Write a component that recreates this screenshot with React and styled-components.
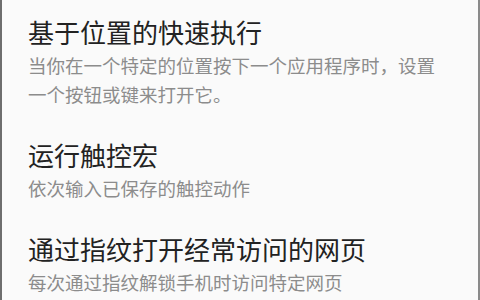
import React from "react";
import styled, { createGlobalStyle } from "styled-components";

const GlobalStyle = createGlobalStyle`
  html, body {
    margin: 0;
    padding: 0;
    background: #fafafa;
  }
  body {
    font-family: "Noto Sans CJK SC", "Noto Sans", sans-serif;
  }
`;

const Screen = styled.div`
  width: 480px;
  height: 300px;
  box-sizing: border-box;
  overflow: hidden;
  background: #fafafa;
  border-left: 2px solid #6e6e6e;
  border-right: 2px solid #8a8a8a;
  display: flex;
  flex-direction: column;
`;

const Item = styled.div`
  padding: ${(props) => (props.$first ? "15px" : "17px")} 24px 12px 26px;
`;

const Title = styled.div`
  font-size: 26px;
  line-height: 34px;
  color: #222222;
  white-space: nowrap;
`;

const Desc = styled.div`
  margin-top: 2px;
  font-size: 18.5px;
  line-height: 29px;
  color: #8c8c8c;
  width: 420px;
`;

const Divider = styled.div`
  height: 1px;
  margin: 0 21px 0 22px;
  background: #e4e4e4;
`;

const items = [
  {
    title: "基于位置的快速执行",
    desc: "当你在一个特定的位置按下一个应用程序时，设置一个按钮或键来打开它。",
  },
  {
    title: "运行触控宏",
    desc: "依次输入已保存的触控动作",
  },
  {
    title: "通过指纹打开经常访问的网页",
    desc: "每次通过指纹解锁手机时访问特定网页",
  },
];

export default function App() {
  return (
    <>
      <GlobalStyle />
      <Screen>
        {items.map((item, i) => (
          <React.Fragment key={item.title}>
            {i > 0 && <Divider />}
            <Item $first={i === 0}>
              <Title>{item.title}</Title>
              <Desc>{item.desc}</Desc>
            </Item>
          </React.Fragment>
        ))}
      </Screen>
    </>
  );
}
